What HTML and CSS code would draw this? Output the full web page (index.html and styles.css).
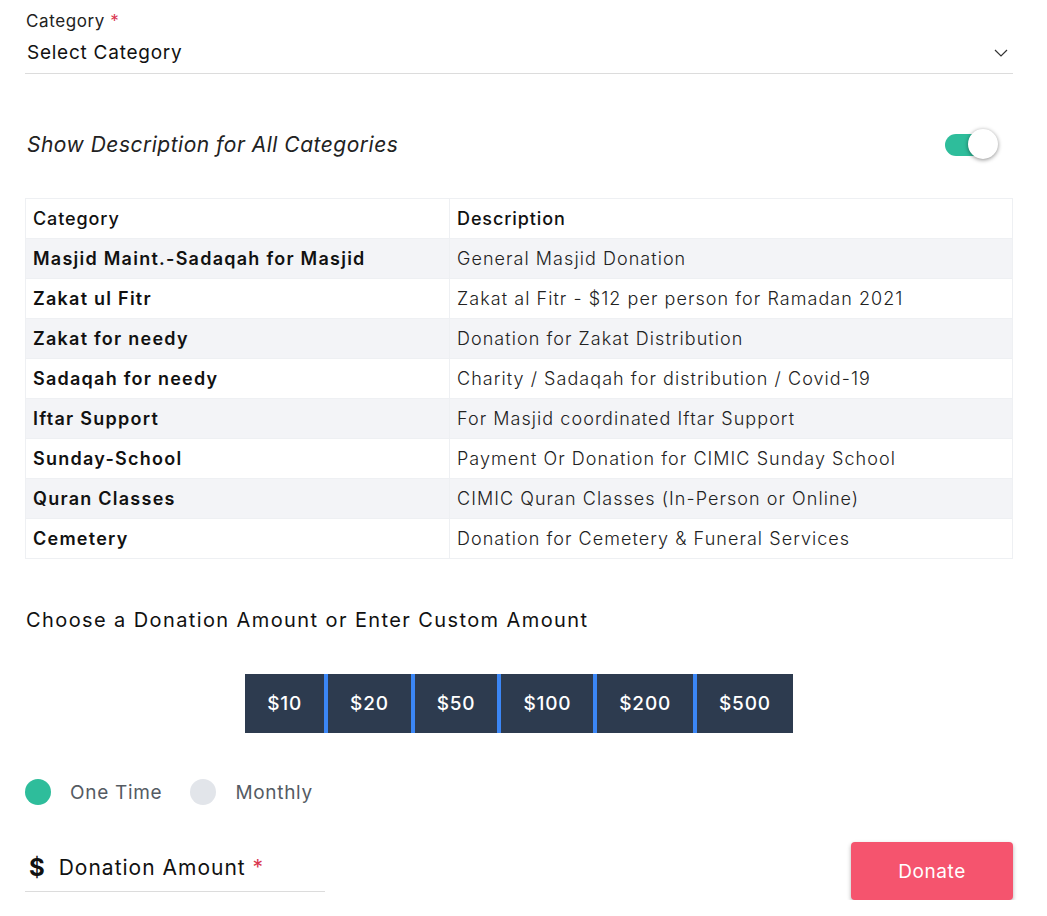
FILE: index.html
```html
<!DOCTYPE html>
<html>
<head>
<meta charset="utf-8">
<link rel="stylesheet" href="styles.css">
</head>
<body>
<div class="page">
  <div class="field">
    <label class="label">Category <span class="req">*</span></label>
    <div class="select">
      <span>Select Category</span>
      <svg class="chev" width="14" height="8" viewBox="0 0 14 8"><path d="M1 1 L7 7 L13 1" fill="none" stroke="#333" stroke-width="1.2"/></svg>
    </div>
  </div>

  <div class="toggle-row">
    <span class="toggle-text">Show Description for All Categories</span>
    <div class="toggle"><div class="track"></div><div class="knob"></div></div>
  </div>

  <table class="cats">
    <thead>
      <tr><th>Category</th><th>Description</th></tr>
    </thead>
    <tbody>
      <tr><td>Masjid Maint.-Sadaqah for Masjid</td><td>General Masjid Donation</td></tr>
      <tr><td>Zakat ul Fitr</td><td>Zakat al Fitr - $12 per person for Ramadan 2021</td></tr>
      <tr><td>Zakat for needy</td><td>Donation for Zakat Distribution</td></tr>
      <tr><td>Sadaqah for needy</td><td>Charity / Sadaqah for distribution / Covid-19</td></tr>
      <tr><td>Iftar Support</td><td>For Masjid coordinated Iftar Support</td></tr>
      <tr><td>Sunday-School</td><td>Payment Or Donation for CIMIC Sunday School</td></tr>
      <tr><td>Quran Classes</td><td>CIMIC Quran Classes (In-Person or Online)</td></tr>
      <tr><td>Cemetery</td><td>Donation for Cemetery &amp; Funeral Services</td></tr>
    </tbody>
  </table>

  <h2 class="choose">Choose a Donation Amount or Enter Custom Amount</h2>

  <div class="amounts">
    <button class="amt">$10</button><button class="amt">$20</button><button class="amt">$50</button><button class="amt">$100</button><button class="amt">$200</button><button class="amt">$500</button>
  </div>

  <div class="radios">
    <label class="radio"><span class="dot on"></span><span>One Time</span></label>
    <label class="radio"><span class="dot"></span><span>Monthly</span></label>
  </div>

  <div class="bottom">
    <div class="amount-input">
      <span class="dollar">$</span>
      <span class="ph">Donation Amount <span class="req">*</span></span>
    </div>
    <button class="donate">Donate</button>
  </div>
</div>
</body>
</html>
```

FILE: styles.css
```css
* { box-sizing: border-box; }
body {
  margin: 0;
  background: #fff;
  font-family: "Inter", "Open Sans", sans-serif;
  color: #111;
}
.page {
  width: 988px;
  margin-left: 25px;
  padding-top: 10px;
}
.label {
  display: block;
  font-size: 17px;
  line-height: 22px;
  color: #222;
  padding-left: 1px;
  letter-spacing: 0.6px;
}
.req { color: #d9364f; }
.select {
  display: flex;
  align-items: center;
  justify-content: space-between;
  height: 42px;
  border-bottom: 1px solid #dcdcdc;
  font-size: 19px;
  padding-left: 2px;
  padding-right: 5px;
  color: #111;
  letter-spacing: 0.75px;
}
.toggle-row {
  display: flex;
  align-items: center;
  justify-content: space-between;
  margin-top: 47px;
  height: 46px;
}
.toggle-text {
  font-size: 21px;
  font-style: italic;
  color: #222;
  padding-left: 2px;
  letter-spacing: 0.5px;
}
.toggle {
  position: relative;
  width: 54px;
  height: 30px;
  margin-right: 14px;
}
.track {
  position: absolute;
  left: 0; top: 5px;
  width: 46px; height: 22px;
  border-radius: 11px;
  background: #2ebd9b;
}
.knob {
  position: absolute;
  left: 23px; top: 0;
  width: 30px; height: 30px;
  border-radius: 50%;
  background: #fff;
  box-shadow: 0 1px 4px rgba(0,0,0,0.45);
}
.cats {
  margin-top: 31px;
  width: 100%;
  border-collapse: collapse;
  font-size: 18px;
}
.cats th, .cats td {
  height: 40px;
  padding: 0 7px;
  text-align: left;
  border: 1px solid #eef0f3;
}
.cats th { font-weight: 500; color: #111; letter-spacing: 0.9px; }
.cats th:first-child, .cats td:first-child { width: 424px; }
.cats td:first-child { font-weight: 600; color: #111; letter-spacing: 1.25px; }
.cats td:last-child { font-weight: 300; color: #222; letter-spacing: 1.05px; }
.cats tbody tr:nth-child(odd) { background: #f3f4f7; }
.choose {
  margin: 48px 0 0 1px;
  font-size: 20px;
  font-weight: 400;
  color: #111;
  line-height: 26px;
  letter-spacing: 1.4px;
}
.amounts {
  display: flex;
  justify-content: center;
  margin-top: 41px;
}
.amt {
  height: 59px;
  background: #2d3b4f;
  color: #fff;
  border: none;
  border-left: 4px solid #3b86f5;
  font-family: inherit;
  font-size: 19px;
  font-weight: 500;
  padding: 0 22px;
  letter-spacing: 0.8px;
}
.amt:first-child { border-left: none; }
.radios {
  display: flex;
  align-items: center;
  gap: 28px;
  margin-top: 46px;
  height: 26px;
}
.radio {
  display: flex;
  align-items: center;
  gap: 19px;
  font-size: 19px;
  color: #555b63;
  letter-spacing: 0.7px;
}
.dot {
  width: 26px; height: 26px;
  border-radius: 50%;
  background: #e2e5ea;
}
.dot.on { background: #2ebd9b; }
.bottom {
  display: flex;
  justify-content: space-between;
  align-items: flex-start;
  margin-top: 31px;
}
.amount-input {
  margin-top: 5px;
  width: 300px;
  height: 51px;
  border-bottom: 1px solid #dcdcdc;
  display: flex;
  align-items: center;
  gap: 14px;
  padding-left: 4px;
  padding-top: 3px;
}
.dollar { font-size: 24px; font-weight: 700; }
.ph { font-size: 21px; color: #111; letter-spacing: 1px; }
.donate {
  margin-top: 6px;
  width: 162px;
  height: 58px;
  background: #f5546e;
  color: #fff;
  border: none;
  border-radius: 4px;
  font-family: inherit;
  font-size: 19px;
  letter-spacing: 0.6px;
  box-shadow: 0 2px 4px rgba(0,0,0,0.3);
}
```
